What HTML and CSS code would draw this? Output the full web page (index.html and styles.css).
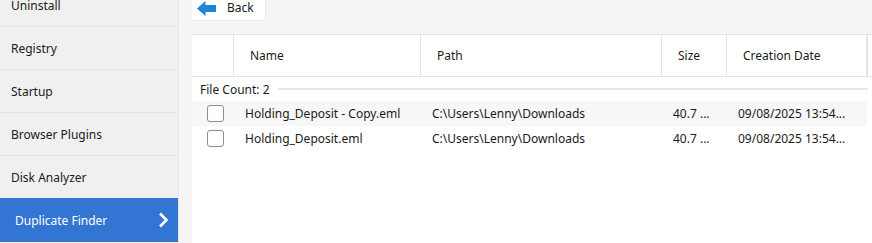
FILE: index.html
```html
<!DOCTYPE html>
<html lang="en">
<head>
    <meta charset="UTF-8">
    <title>Duplicate Finder</title>
    <link rel="stylesheet" href="styles.css">
</head>
<body>
    <div class="sidebar">
        <ul class="nav">
            <li>Uninstall</li>
            <li>Registry</li>
            <li>Startup</li>
            <li>Browser Plugins</li>
            <li class="before-active">Disk Analyzer</li>
            <li class="active">
                Duplicate Finder
                <svg class="chevron" width="11" height="16" viewBox="0 0 11 16">
                    <polyline points="2,1.5 8.5,8 2,14.5" fill="none" stroke="#fff" stroke-width="2.6"/>
                </svg>
            </li>
        </ul>
    </div>

    <div class="main">
        <div class="toolbar">
            <button class="back">
                <svg width="19" height="15" viewBox="0 0 19 15">
                    <path d="M0 7.5 L8.5 0 V4 H19 V11 H8.5 V15 Z" fill="#1f86d6"/>
                </svg>
                <span>Back</span>
            </button>
        </div>

        <div class="panel">
            <div class="grid header">
                <div class="cell"></div>
                <div class="cell">Name</div>
                <div class="cell">Path</div>
                <div class="cell">Size</div>
                <div class="cell last">Creation Date</div>
            </div>

            <div class="group">
                <span>File Count: 2</span>
                <div class="group-line"></div>
            </div>

            <div class="grid row alt">
                <div class="cell"><span class="check"></span></div>
                <div class="cell">Holding_Deposit - Copy.eml</div>
                <div class="cell">C:\Users\Lenny\Downloads</div>
                <div class="cell">40.7 ...</div>
                <div class="cell">09/08/2025 13:54...</div>
            </div>
            <div class="grid row">
                <div class="cell"><span class="check"></span></div>
                <div class="cell">Holding_Deposit.eml</div>
                <div class="cell">C:\Users\Lenny\Downloads</div>
                <div class="cell">40.7 ...</div>
                <div class="cell">09/08/2025 13:54...</div>
            </div>
        </div>
    </div>
</body>
</html>
```

FILE: styles.css
```css
body {
    margin: 0;
    height: 243px;
    overflow: hidden;
    display: flex;
    font-family: "Noto Sans", Arial, sans-serif;
    font-size: 12px;
    color: #1a1a1a;
    background-color: #f5f5f5;
}
.sidebar {
    width: 178px;
    flex-shrink: 0;
    background-color: #f0f0f0;
    border-right: 1px solid #e8e8e8;
    overflow: hidden;
}
.nav {
    list-style: none;
    margin: -16px 0 0 0;
    padding: 0;
}
.nav li {
    height: 42px;
    border-bottom: 1px solid #e3e3e3;
    display: flex;
    align-items: center;
    padding-left: 11px;
}
.nav li.before-active {
    border-bottom: none;
}
.nav li.active {
    background-color: #3375d3;
    color: white;
    padding-left: 15px;
    justify-content: space-between;
    padding-right: 9px;
    border-bottom: none;
    height: 44px;
}
.main {
    flex: 1;
    display: flex;
    flex-direction: column;
    padding-left: 13px;
}
.toolbar {
    height: 34px;
}
.back {
    display: flex;
    align-items: center;
    gap: 11px;
    width: 74px;
    height: 21px;
    padding: 0 0 0 5px;
    border: none;
    border-right: 1px solid #ececec;
    border-bottom: 1px solid #ececec;
    background-color: white;
    font: inherit;
    color: inherit;
}
.back svg {
    margin-top: -4px;
}
.back span {
    margin-top: -5px;
}
.panel {
    flex: 1;
    background-color: white;
    border-top: 1px solid #e3e3e3;
}
.grid {
    display: grid;
    grid-template-columns: 42px 187px 241px 65px 141px;
}
.header {
    height: 41px;
    border-bottom: 1px solid #e3e3e3;
}
.header .cell {
    border-right: 1px solid #e3e3e3;
    display: flex;
    align-items: center;
    padding-left: 16px;
}
.header .cell.last {
    border-right: 2px solid #e3e3e3;
}
.group {
    height: 24px;
    display: flex;
    align-items: center;
    padding-left: 8px;
    gap: 8px;
    width: 668px;
}
.group-line {
    flex: 1;
    height: 2px;
    background-color: #e6e6e6;
}
.row {
    height: 25px;
    width: 675px;
}
.row.alt {
    background-color: #f7f7f7;
}
.row .cell {
    display: flex;
    align-items: center;
    padding-left: 11px;
    white-space: nowrap;
}
.row .cell:first-child {
    padding-left: 15px;
}
.check {
    width: 15px;
    height: 15px;
    border: 1px solid #8c8c8c;
    border-radius: 3px;
    background-color: white;
}
```
